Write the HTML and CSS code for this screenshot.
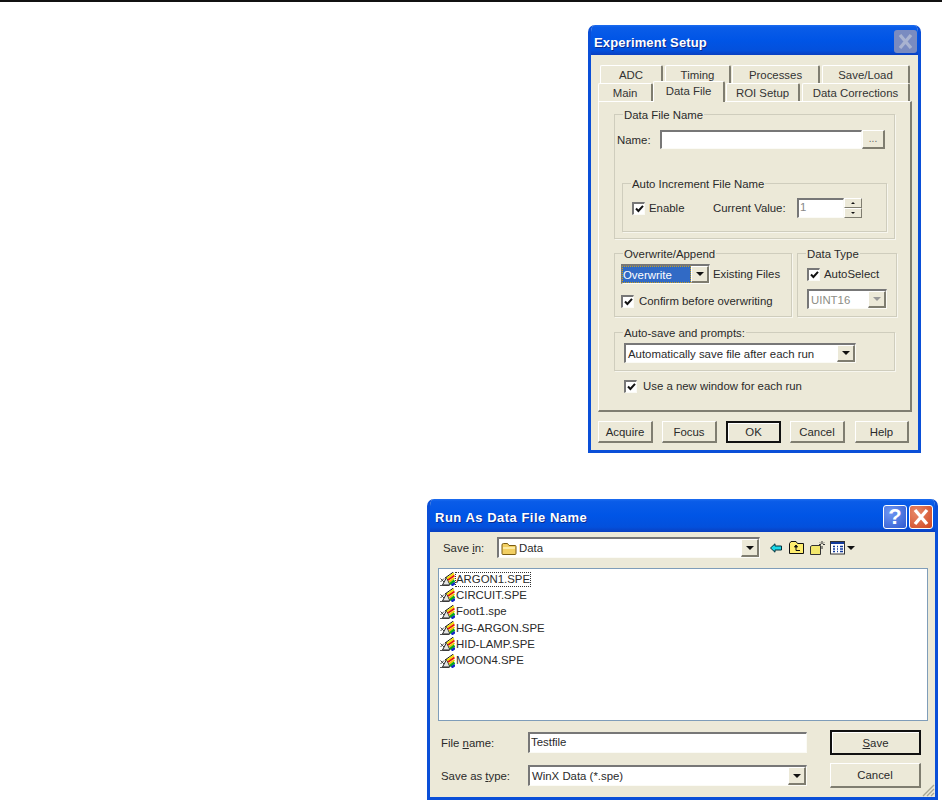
FILE: index.html
```html
<!DOCTYPE html>
<html lang="en">

<head>
    <meta charset="UTF-8">
    <meta name="viewport" content="width=device-width, initial-scale=1.0">
    <title>Experiment Setup</title>
    <link rel="stylesheet" href="styles.css">
</head>

<body>
    <svg class="defs" width="0" height="0">
        <symbol id="tick" viewBox="0 0 9 9">
            <path d="M1 4.5 L3.4 7 L8 1.8" fill="none" stroke="#111" stroke-width="2"/>
        </symbol>
        <symbol id="spe" viewBox="0 0 15 14">
            <path d="M0 13.5 H9" stroke="#555" stroke-width="1"/>
            <path d="M0.5 6.5 L4 10 M4 6.5 L0.5 10" stroke="#444" stroke-width="1"/>
            <path d="M2.5 13 L6.5 5.5 L10 13 Z" fill="#e4e4e4" stroke="#222" stroke-width="1"/>
            <path d="M5 6 L13.5 0" stroke="#111" stroke-width="1"/>
            <path d="M7 6.5 L14 1.5" stroke="#f4e000" stroke-width="2"/>
            <path d="M8 8 L14.5 3.5" stroke="#e81808" stroke-width="2"/>
            <path d="M9 10 L14.5 6" stroke="#f0c800" stroke-width="2"/>
            <path d="M10 12 L14.5 8.5" stroke="#08a818" stroke-width="2.4"/>
            <path d="M11.5 13.5 L15 11" stroke="#1028c8" stroke-width="2.4"/>
        </symbol>
    </svg>

    <div class="rule"></div>

    <div class="window setup-window">
        <div class="titlebar">
            <span class="title">Experiment Setup</span>
            <span class="title-btn disabled-close">
                <svg width="23" height="23" viewBox="0 0 23 23"><path d="M6 5 L17 18 M17 5 L6 18" stroke="#a9b3d0" stroke-width="3.4"/></svg>
            </span>
        </div>
        <div class="setup-body">
            <div class="tab-row back-row">
                <div class="tab w-adc">ADC</div>
                <div class="tab w-timing">Timing</div>
                <div class="tab w-proc">Processes</div>
                <div class="tab w-save">Save/Load</div>
            </div>
            <div class="tab-row">
                <div class="tab w-main">Main</div>
                <div class="tab tab-active">Data File</div>
                <div class="tab w-roi">ROI Setup</div>
                <div class="tab w-corr">Data Corrections</div>
            </div>
            <div class="panel">
                <div class="group group-file">
                    <span class="legend">Data File Name</span>
                    <div class="name-row">
                        <span class="name-label">Name:</span>
                        <div class="field name-field"></div>
                        <div class="btn browse-btn">...</div>
                    </div>
                    <div class="group group-auto">
                        <span class="legend">Auto Increment File Name</span>
                        <div class="auto-row">
                            <span class="check"><svg width="9" height="9"><use href="#tick"/></svg></span>
                            <span class="enable-label">Enable</span>
                            <span class="current-label">Current Value:</span>
                            <div class="field spin-field">1</div>
                            <div class="spin">
                                <span class="spin-btn"><i class="arrow-up"></i></span>
                                <span class="spin-btn"><i class="arrow-down"></i></span>
                            </div>
                        </div>
                    </div>
                </div>

                <div class="group-pair">
                    <div class="group group-over">
                        <span class="legend">Overwrite/Append</span>
                        <div class="over-row">
                            <div class="combo over-combo">
                                <span class="combo-value selected">Overwrite</span>
                                <span class="drop"><i class="arrow-down"></i></span>
                            </div>
                            <span class="existing">Existing Files</span>
                        </div>
                        <label class="check-row confirm-row">
                            <span class="check"><svg width="9" height="9"><use href="#tick"/></svg></span>
                            <span>Confirm before overwriting</span>
                        </label>
                    </div>
                    <div class="group group-type">
                        <span class="legend">Data Type</span>
                        <label class="check-row auto-select">
                            <span class="check"><svg width="9" height="9"><use href="#tick"/></svg></span>
                            <span>AutoSelect</span>
                        </label>
                        <div class="combo type-combo">
                            <span class="combo-value disabled">UINT16</span>
                            <span class="drop"><i class="arrow-down arrow-disabled"></i></span>
                        </div>
                    </div>
                </div>

                <div class="group group-prompts">
                    <span class="legend">Auto-save and prompts:</span>
                    <div class="combo prompts-combo">
                        <span class="combo-value">Automatically save file after each run</span>
                        <span class="drop"><i class="arrow-down"></i></span>
                    </div>
                </div>

                <label class="check-row window-row">
                    <span class="check"><svg width="9" height="9"><use href="#tick"/></svg></span>
                    <span>Use a new window for each run</span>
                </label>
            </div>
            <div class="setup-buttons">
                <div class="btn">Acquire</div>
                <div class="btn">Focus</div>
                <div class="btn btn-default">OK</div>
                <div class="btn">Cancel</div>
                <div class="btn btn-help">Help</div>
            </div>
        </div>
    </div>

    <div class="window save-window">
        <div class="titlebar">
            <span class="title title-run">Run As Data File Name</span>
            <span class="title-btn help-btn">?</span>
            <span class="title-btn close-btn">
                <svg width="22" height="22" viewBox="0 0 22 22"><path d="M5 4 L17 18 M17 4 L5 18" stroke="#fff" stroke-width="3.4"/></svg>
            </span>
        </div>
        <div class="save-body">
            <div class="save-top">
                <span class="savein-label">Save <u>i</u>n:</span>
                <div class="combo savein-combo">
                    <span class="combo-value folder-value">
                        <svg width="16" height="13" viewBox="0 0 16 13">
                            <path d="M1 3 L1 11.5 Q1 12.5 2 12.5 H14 Q15 12.5 15 11.5 V4.5 Q15 3.5 14 3.5 H8 L6.5 1.5 H2.5 Q1 1.5 1 3 Z" fill="#f2cf62" stroke="#7a5c12"/>
                            <path d="M2 6 H14" stroke="#fff3b8" stroke-width="1.5"/>
                        </svg>
                        Data
                    </span>
                    <span class="drop"><i class="arrow-down"></i></span>
                </div>
                <div class="toolbar">
                    <svg class="tool-back" width="12" height="10" viewBox="0 0 12 10">
                        <path d="M0.5 5 L5 0.8 V3 H11.5 V7 H5 V9.2 Z" fill="#19d8e8" stroke="#05303a"/>
                    </svg>
                    <svg class="tool-up" width="15" height="13" viewBox="0 0 15 13">
                        <path d="M0.5 12.5 V2.5 L2 0.5 H7 L8.5 2.5 H14.5 V12.5 Z" fill="#ffee70" stroke="#111"/>
                        <path d="M7 9.5 H11 M5.5 6 H8.5 L7 4 Z M7 6 V9.5" fill="#111" stroke="#111"/>
                    </svg>
                    <svg class="tool-new" width="15" height="14" viewBox="0 0 15 14">
                        <path d="M0.5 13.5 V5.5 L2 4.5 H10.5 V13.5 Z" fill="#f2e76c" stroke="#333"/>
                        <path d="M12 0 V3 M12 5 V8 M9 3.5 H11 M13 3.5 H15 M10 1.5 L11 2.5 M14 1.5 L13 2.5" stroke="#333"/>
                    </svg>
                    <svg class="tool-view" width="15" height="14" viewBox="0 0 15 14">
                        <rect x="0.5" y="0.5" width="14" height="12.5" fill="#fff" stroke="#333"/>
                        <rect x="1" y="1" width="13" height="2" fill="#123a9c"/>
                        <path d="M3 5.5 H5 M7 5.5 H8 M10 5.5 H13 M3 8 H5 M7 8 H8 M10 8 H13 M3 10.5 H5 M7 10.5 H8 M10 10.5 H13" stroke="#123a9c" stroke-width="1.4"/>
                    </svg>
                    <i class="arrow-down view-arrow"></i>
                </div>
            </div>
            <div class="file-list">
                <div class="file-row"><svg width="15" height="14"><use href="#spe"/></svg><span class="file-name focused">ARGON1.SPE</span></div>
                <div class="file-row"><svg width="15" height="14"><use href="#spe"/></svg><span class="file-name">CIRCUIT.SPE</span></div>
                <div class="file-row"><svg width="15" height="14"><use href="#spe"/></svg><span class="file-name">Foot1.spe</span></div>
                <div class="file-row"><svg width="15" height="14"><use href="#spe"/></svg><span class="file-name">HG-ARGON.SPE</span></div>
                <div class="file-row"><svg width="15" height="14"><use href="#spe"/></svg><span class="file-name">HID-LAMP.SPE</span></div>
                <div class="file-row"><svg width="15" height="14"><use href="#spe"/></svg><span class="file-name">MOON4.SPE</span></div>
            </div>
            <div class="save-bottom">
                <span class="form-label">File <u>n</u>ame:</span>
                <div class="field filename-field">Testfile</div>
                <div class="btn btn-default save-btn"><span><u>S</u>ave</span></div>
                <span class="form-label">Save as <u>t</u>ype:</span>
                <div class="combo type-field">
                    <span class="combo-value">WinX Data (*.spe)</span>
                    <span class="drop"><i class="arrow-down"></i></span>
                </div>
                <div class="btn cancel-btn">Cancel</div>
            </div>
        </div>
        <svg class="grip" width="14" height="14" viewBox="0 0 14 14">
            <path d="M13 2 L2 13 M13 6 L6 13 M13 10 L10 13" stroke="#a8a894" stroke-width="1.4"/>
        </svg>
    </div>
</body>

</html>
```

FILE: styles.css
```css
:root {
    --face: #ece9d8;
    --ink: #2a2a2a;
    --line: #cfcdbd;
    --shade: #7f7d70;
}

* {
    margin: 0;
    padding: 0;
    box-sizing: border-box;
}

body {
    position: relative;
    width: 942px;
    height: 800px;
    overflow: hidden;
    background: #fff;
    font-family: "Liberation Sans", Arial, sans-serif;
    font-size: 11.4px;
    line-height: 14px;
    color: var(--ink);
}

.defs {
    display: block;
    height: 0;
}

.rule {
    height: 2px;
    background: #111;
}

/* Windows */
.window {
    position: absolute;
    display: flex;
    flex-direction: column;
    background: var(--face);
    border: 3px solid #0a4fd8;
    border-top: none;
    border-radius: 7px 7px 0 0;
    overflow: hidden;
}

.setup-window {
    left: 588px;
    top: 25px;
    width: 333px;
    height: 428px;
}

.save-window {
    left: 427px;
    top: 499px;
    width: 511px;
    height: 301px;
}

.titlebar {
    display: flex;
    align-items: center;
    flex: none;
    height: 30px;
    margin: 0 -3px;
    padding: 3px 4px 0 6px;
    background: linear-gradient(#1c6cf0 0, #0a5ce8 8%, #0055e6 50%, #0350dc 85%, #0a3fc0 100%);
}

.title {
    flex: 1;
    padding-top: 2px;
    font-size: 13px;
    font-weight: bold;
    color: #fff;
    letter-spacing: 0.15px;
    text-shadow: 1px 1px 0 #0a2c90;
}

.title-run {
    padding-left: 2px;
    letter-spacing: 0.5px;
}

.title-btn {
    display: flex;
    align-items: center;
    justify-content: center;
    border-radius: 3px;
}

.disabled-close {
    width: 23px;
    height: 23px;
    background: #7a8bc0;
}

.save-window .titlebar {
    height: 33px;
    padding-right: 5px;
}

.help-btn {
    width: 24px;
    height: 24px;
    border: 1px solid #fff;
    background: radial-gradient(circle at 30% 30%, #6f97f2, #2f59d0);
    font-size: 22px;
    font-weight: bold;
    color: #fff;
}

.close-btn {
    width: 24px;
    height: 24px;
    margin-left: 2px;
    border: 1px solid #fff;
    background: radial-gradient(circle at 30% 30%, #e88a6a, #cf4520);
}

/* Setup dialog */
.setup-body {
    flex: 1;
    padding: 10px 6px 7px 7px;
}

.tab-row {
    display: flex;
    height: 18px;
    align-items: flex-end;
}

.back-row {
    padding-left: 2px;
    gap: 2px;
}

.back-row .w-proc {
    margin-left: -1px;
}

.tab {
    display: flex;
    align-items: center;
    justify-content: center;
    height: 18px;
    flex: none;
    background: var(--face);
    border-top: 1px solid #fff;
    border-left: 1px solid #fff;
    border-right: 2px solid var(--shade);
    border-radius: 2px 2px 0 0;
    color: #333;
}

.w-adc { width: 63px; }
.w-timing { width: 66px; }
.w-proc { width: 88px; }
.w-save { width: 88px; }
.w-main { width: 55px; }
.w-roi { width: 74px; margin-left: 1px; }
.w-corr { width: 108px; margin-left: 2px; }

.tab-active {
    position: relative;
    z-index: 1;
    width: 72px;
    height: 21px;
    margin-bottom: -1px;
    padding-bottom: 3px;
}

.panel {
    width: 314px;
    height: 311px;
    padding: 12px 0 0 15px;
    background: var(--face);
    border-top: 1px solid #fff;
    border-left: 1px solid #fff;
    border-right: 2px solid var(--shade);
    border-bottom: 2px solid var(--shade);
}

.group {
    position: relative;
    border: 1px solid var(--line);
    box-shadow: 1px 1px 0 #f7f6ee;
}

.legend {
    position: absolute;
    top: -7px;
    left: 8px;
    padding: 0 1px;
    background: var(--face);
    white-space: nowrap;
}

.group-file {
    width: 281px;
    height: 125px;
    padding: 15px 0 0 2px;
}

.name-row {
    display: flex;
    align-items: center;
    height: 19px;
}

.name-label {
    width: 43px;
}

.field {
    background: #fff;
    border-top: 2px solid #777;
    border-left: 2px solid #777;
    border-bottom: 1px solid #fbfbf6;
    border-right: 1px solid #fbfbf6;
}

.name-field {
    width: 202px;
    height: 19px;
}

.btn {
    display: flex;
    align-items: center;
    justify-content: center;
    flex: none;
    width: 55px;
    height: 22px;
    background: var(--face);
    border-top: 1px solid #fff;
    border-left: 1px solid #fff;
    border-right: 2px solid var(--shade);
    border-bottom: 2px solid var(--shade);
}

.browse-btn {
    width: 23px;
    height: 19px;
    color: #666;
    font-size: 10px;
}

.group-auto {
    width: 265px;
    height: 49px;
    margin: 34px 0 0 5px;
    padding: 14px 0 0 9px;
}

.auto-row {
    display: flex;
    align-items: center;
    height: 20px;
}

.check {
    display: flex;
    align-items: center;
    justify-content: center;
    flex: none;
    width: 13px;
    height: 13px;
    background: #fff;
    border-top: 2px solid #777;
    border-left: 2px solid #777;
    border-bottom: 1px solid #fbfbf6;
    border-right: 1px solid #fbfbf6;
}

.enable-label {
    width: 64px;
    margin-left: 4px;
}

.current-label {
    width: 84px;
}

.spin-field {
    width: 47px;
    height: 20px;
    padding-left: 1px;
    color: #888;
    line-height: 15px;
}

.spin {
    display: flex;
    flex-direction: column;
    width: 18px;
    height: 20px;
}

.spin-btn {
    display: flex;
    align-items: center;
    justify-content: center;
    height: 10px;
    background: var(--face);
    border-top: 1px solid #fff;
    border-left: 1px solid #fff;
    border-right: 1px solid var(--shade);
    border-bottom: 1px solid var(--shade);
}

.arrow-down,
.arrow-up {
    display: block;
    width: 0;
    height: 0;
    border-left: 4px solid transparent;
    border-right: 4px solid transparent;
}

.arrow-down {
    border-top: 4px solid #111;
}

.arrow-up {
    border-bottom: 4px solid #111;
}

.spin-btn .arrow-down,
.spin-btn .arrow-up {
    border-left-width: 2px;
    border-right-width: 2px;
    border-top-width: 2px;
    border-bottom-width: 2px;
}

.spin-btn .arrow-down {
    border-bottom-width: 0;
}

.spin-btn .arrow-up {
    border-top-width: 0;
}

.arrow-disabled {
    border-top-color: #999;
}

.group-pair {
    display: flex;
    gap: 5px;
    margin-top: 14px;
}

.group-over {
    width: 178px;
    height: 64px;
    padding: 10px 0 0 6px;
}

.group-type {
    width: 100px;
    height: 64px;
    padding: 13px 0 0 9px;
}

.over-row {
    display: flex;
    align-items: center;
}

.combo {
    display: flex;
    flex: none;
    align-items: stretch;
    background: #fff;
    border-top: 2px solid #777;
    border-left: 2px solid #777;
    border-bottom: 1px solid #fbfbf6;
    border-right: 1px solid #fbfbf6;
}

.combo-value {
    display: flex;
    align-items: center;
    flex: 1;
    padding-left: 2px;
    white-space: nowrap;
}

.drop {
    display: flex;
    align-items: center;
    justify-content: center;
    flex: none;
    width: 18px;
    background: var(--face);
    border-top: 1px solid #fff;
    border-left: 1px solid #fff;
    border-right: 2px solid var(--shade);
    border-bottom: 2px solid var(--shade);
}

.over-combo {
    width: 89px;
    height: 20px;
}

.selected {
    margin: 0 0 0 -1px;
    padding-left: 1px;
    background: #316ac5;
    color: #fff;
    outline: 1px dotted #c9a020;
    outline-offset: -1px;
}

.disabled {
    color: #8d8d85;
}

.existing {
    margin-left: 3px;
}

.check-row {
    display: flex;
    align-items: center;
    gap: 5px;
}

.confirm-row {
    margin-top: 10px;
}

.auto-select {
    gap: 4px;
}

.type-combo {
    width: 80px;
    height: 20px;
    margin-top: 8px;
}

.group-prompts {
    width: 281px;
    height: 39px;
    margin-top: 15px;
    padding: 10px 0 0 9px;
}

.prompts-combo {
    width: 232px;
    height: 20px;
}

.window-row {
    margin: 8px 0 0 10px;
    gap: 6px;
}

.setup-buttons {
    display: flex;
    gap: 9px;
    margin-top: 9px;
}

.btn-default {
    border: 2px solid #111;
    box-shadow: inset 1px 1px 0 #fff;
}

.btn-help {
    width: 54px;
    margin-left: 1px;
}

/* Save dialog */
.save-body {
    flex: 1;
    padding: 5px 7px 0 8px;
}

.save-top {
    display: flex;
    align-items: center;
    height: 21px;
    padding-left: 5px;
}

.savein-label {
    width: 54px;
}

.savein-combo {
    width: 263px;
    height: 21px;
}

.folder-value {
    gap: 2px;
    padding-left: 2px;
}

.toolbar {
    display: flex;
    align-items: center;
    margin-left: 10px;
}

.tool-up {
    margin-left: 7px;
}

.tool-new {
    margin-left: 6px;
}

.tool-view {
    margin-left: 5px;
}

.view-arrow {
    margin-left: 2px;
}

.file-list {
    display: flex;
    flex-direction: column;
    width: 490px;
    height: 153px;
    margin-top: 10px;
    padding: 2px 0 0 1px;
    background: #fff;
    border: 1px solid #7f9db9;
}

.file-row {
    display: flex;
    align-items: center;
    height: 16.3px;
}

.file-name {
    padding: 0;
    border: 1px solid transparent;
    line-height: 13px;
}

.focused {
    border: 1px dotted #333;
}

.save-bottom {
    display: grid;
    grid-template-columns: 87px 279px 91px;
    column-gap: 0;
    align-items: center;
    margin: 9px 0 0 3px;
    row-gap: 8px;
}

.filename-field {
    width: 279px;
    height: 21px;
    padding-left: 1px;
    line-height: 16px;
}

.type-field {
    width: 279px;
    height: 21px;
}

.save-btn,
.cancel-btn {
    width: 91px;
    height: 25px;
    margin-left: 23px;
}

.grip {
    position: absolute;
    right: 0;
    bottom: 0;
}
```
